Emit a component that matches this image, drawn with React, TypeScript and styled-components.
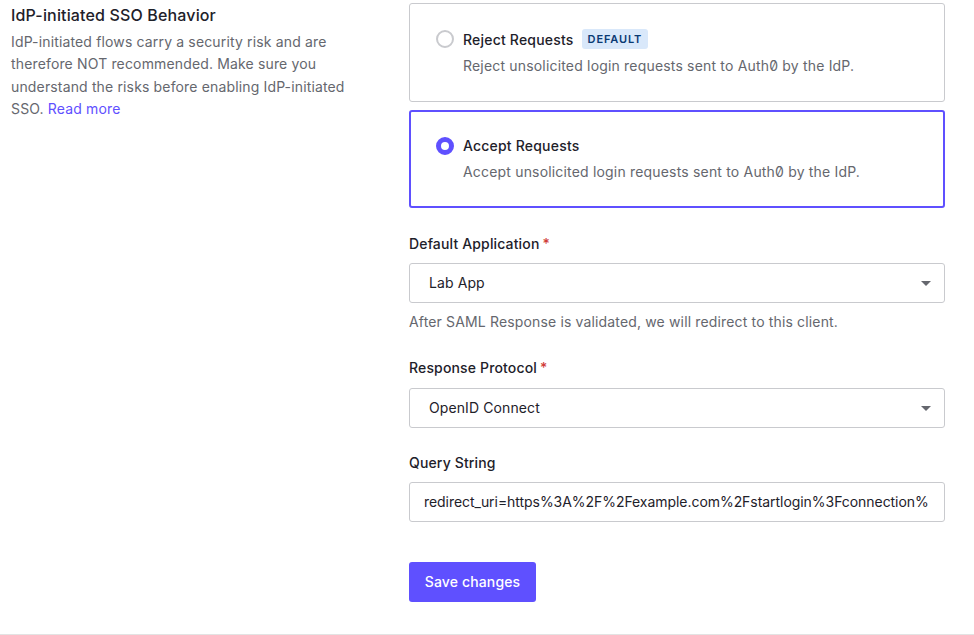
import styled, { createGlobalStyle } from "styled-components";

const GlobalStyle = createGlobalStyle`
  html, body {
    margin: 0;
    padding: 0;
    background: #fff;
    font-family: Inter, "Liberation Sans", sans-serif;
    letter-spacing: 0.15px;
  }
  * {
    box-sizing: border-box;
  }
`;

const App = () => {
  return (
    <>
      <GlobalStyle />
      <Page>
        <Intro>
          <Title>IdP-initiated SSO Behavior</Title>
          <Description>
            IdP-initiated flows carry a security risk and are therefore NOT
            recommended. Make sure you understand the risks before enabling
            IdP-initiated SSO. <ReadMore href="#">Read more</ReadMore>
          </Description>
        </Intro>
        <Form>
          <Options>
            <OptionCard>
              <Radio />
              <OptionBody>
                <OptionHead>
                  <OptionTitle>Reject Requests</OptionTitle>
                  <Badge>DEFAULT</Badge>
                </OptionHead>
                <OptionText>
                  Reject unsolicited login requests sent to <Zero>Auth0</Zero> by the IdP.
                </OptionText>
              </OptionBody>
            </OptionCard>
            <OptionCard $selected>
              <Radio $selected />
              <OptionBody $selected>
                <OptionHead>
                  <OptionTitle>Accept Requests</OptionTitle>
                </OptionHead>
                <OptionText>
                  Accept unsolicited login requests sent to <Zero>Auth0</Zero> by the IdP.
                </OptionText>
              </OptionBody>
            </OptionCard>
          </Options>

          <Field>
            <Label>
              Default Application<Required>*</Required>
            </Label>
            <SelectBox>
              Lab App
              <Caret />
            </SelectBox>
            <Help>After SAML Response is validated, we will redirect to this client.</Help>
          </Field>

          <Field>
            <Label $gap={10}>
              Response Protocol<Required>*</Required>
            </Label>
            <SelectBox>
              OpenID Connect
              <Caret />
            </SelectBox>
          </Field>

          <Field $top={25}>
            <Label>Query String</Label>
            <TextInput
              readOnly
              value="redirect_uri=https%3A%2F%2Fexample.com%2Fstartlogin%3Fconnection%3Dlab"
            />
          </Field>

          <SaveButton>Save changes</SaveButton>
        </Form>
      </Page>
    </>
  );
};

export default App;

const Page = styled.main`
  width: 974px;
  height: 635px;
  overflow: hidden;
  display: flex;
  padding: 3px 29px 0 11px;
  border-bottom: 1px solid #e3e3e3;
`;

const Intro = styled.section`
  width: 340px;
  margin-right: 58px;
  padding-top: 1px;
`;

const Title = styled.h2`
  margin: 0;
  font-size: 16px;
  line-height: 22px;
  font-weight: 500;
  color: #1e212a;
`;

const Description = styled.p`
  margin: 5px 0 0;
  font-size: 14px;
  line-height: 22.4px;
  color: #65676e;
`;

const ReadMore = styled.a`
  color: #5f50ff;
  text-decoration: none;
`;

const Form = styled.section`
  width: 536px;
`;

const Options = styled.div`
  display: flex;
  flex-direction: column;
  gap: 8px;
`;

const OptionCard = styled.div<{ $selected?: boolean }>`
  height: ${({ $selected }) => ($selected ? "98px" : "99px")};
  display: flex;
  gap: 9px;
  padding: ${({ $selected }) => ($selected ? "24px 25px 0" : "25px 26px 0")};
  background: #fff;
  border-radius: 3px;
  border: ${({ $selected }) =>
    $selected ? "2px solid #5f50ff" : "1px solid #c9cace"};
`;

const Radio = styled.span<{ $selected?: boolean }>`
  flex: none;
  width: 18px;
  height: 18px;
  margin-top: 1px;
  border-radius: 50%;
  background: #fff;
  border: ${({ $selected }) =>
    $selected ? "5px solid #5f50ff" : "2px solid #c9cace"};
`;

const OptionBody = styled.div<{ $selected?: boolean }>`
  display: flex;
  flex-direction: column;
  gap: 6px;
  margin-top: ${({ $selected }) => ($selected ? "-1px" : "0")};
`;

const OptionHead = styled.div`
  display: flex;
  flex: none;
  align-items: center;
  gap: 8px;
  height: 20px;
`;

const OptionTitle = styled.span`
  font-size: 14px;
  font-weight: 500;
  letter-spacing: 0.2px;
  color: #1e212a;
`;

const Badge = styled.span`
  height: 20px;
  padding: 0 6px;
  display: flex;
  align-items: center;
  border-radius: 3px;
  background: #d9e8fa;
  color: #0a3a73;
  font-size: 11px;
  font-weight: 600;
  letter-spacing: 0.9px;
`;

const OptionText = styled.p`
  margin: 0;
  font-size: 14px;
  line-height: 22px;
  letter-spacing: 0.18px;
  color: #65676e;
`;

const Zero = styled.span`
  font-feature-settings: "zero" 1;
`;

const Field = styled.div<{ $top?: number }>`
  margin-top: ${({ $top }) => $top ?? 26}px;
`;

const Label = styled.label<{ $gap?: number }>`
  display: block;
  font-size: 14px;
  line-height: 20px;
  font-weight: 500;
  color: #1e212a;
  margin-bottom: ${({ $gap }) => $gap ?? 9}px;
`;

const Required = styled.span`
  color: #d03c38;
  margin-left: 3px;
`;

const SelectBox = styled.div`
  position: relative;
  height: 40px;
  display: flex;
  align-items: center;
  padding: 0 19px 2px;
  border: 1px solid #c9cace;
  border-radius: 3px;
  font-size: 14px;
  letter-spacing: 0.1px;
  color: #1e212a;
`;

const Caret = styled.span`
  position: absolute;
  right: 13px;
  top: 17px;
  width: 0;
  height: 0;
  border-left: 5px solid transparent;
  border-right: 5px solid transparent;
  border-top: 5px solid #65676e;
`;

const Help = styled.p`
  margin: 9px 0 0;
  font-size: 14px;
  line-height: 20px;
  color: #65676e;
`;

const TextInput = styled.input`
  display: block;
  width: 100%;
  height: 40px;
  padding: 0 15px 2px 14px;
  border: 1px solid #c9cace;
  border-radius: 3px;
  background: #fff;
  font-family: inherit;
  font-size: 14px;
  letter-spacing: -0.05px;
  color: #1e212a;
  outline: none;
`;

const SaveButton = styled.button`
  display: block;
  margin-top: 40px;
  height: 40px;
  width: 127px;
  padding: 0 0 2px;
  border: none;
  border-radius: 3px;
  background: #5f50ff;
  color: #fff;
  font-family: inherit;
  font-size: 14px;
  font-weight: 500;
  letter-spacing: 0.15px;
`;
